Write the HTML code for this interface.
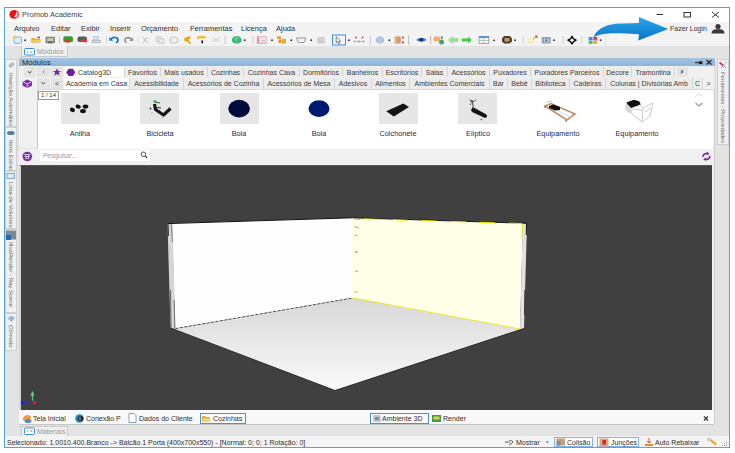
<!DOCTYPE html>
<html><head><meta charset="utf-8">
<style>
*{margin:0;padding:0;box-sizing:border-box}
html,body{width:735px;height:453px;overflow:hidden;background:#fff;font-family:"Liberation Sans",sans-serif;color:#222}
.a{position:absolute}
.t{position:absolute;white-space:nowrap;font-size:7px;line-height:8px;color:#303030}
#win{left:4px;top:7px;width:726px;height:441px;border:1px solid #55a2e2;background:#e3e3e3}
#title{left:5px;top:8px;width:724px;height:14px;background:#fff}
#menu{left:5px;top:22px;width:724px;height:24px;background:#f3f3f3}
#tabrow{left:5px;top:46px;width:724px;height:11px;background:#e3e3e3}
#hdr{left:19px;top:57.5px;width:696px;height:8.5px;background:linear-gradient(#a3c4e2,#8fb4d6)}
#row1{left:19px;top:66px;width:695px;height:82px;background:#f0f0f0}
#items{left:37px;top:89px;width:676px;height:60px;background:#fff;border-top:1px solid #d9d9d9;border-left:1px solid #c8c8c8}
#sbar{left:19px;top:149px;width:695px;height:16px;background:#f0f0f0}
#vp{left:19px;top:165px;width:693px;height:245px;background:#404040;border-top:1px solid #555;border-left:2px solid #d4d4d4}
#btabs{left:19px;top:410px;width:695px;height:15px;background:#f8f8f8;border-bottom:1px solid #c6c6c6}
#status{left:5px;top:436px;width:724px;height:11px;background:#f4f4f4}
#lpanel{left:5px;top:57px;width:14px;height:379px;background:#e3e3e3}
#rpanel{left:714px;top:57px;width:15px;height:379px;background:#e3e3e3}
.tb{position:absolute;top:67px;height:10px;background:#ececec;border-right:1px solid #d6d6d6;font-size:7px;line-height:12px;text-align:center;white-space:nowrap;color:#3a3a3a}
.tb2{top:78px;height:11px;line-height:12px}
.btn{position:absolute;background:#e4e4e4;font-size:7px;text-align:center;color:#333}
.vt{position:absolute;writing-mode:vertical-rl;font-size:6px;line-height:10px;overflow:hidden;white-space:nowrap;color:#6a6a6a;background:#f0f0f0;border:1px solid #cfcfcf}
.lbl{position:absolute;top:130px;width:80px;text-align:center;font-size:7.3px;line-height:8px;color:#1e2a50}
.thumb{position:absolute;top:93px;width:39px;height:31px;background:#e6e6e6}
</style></head><body>
<div id="win" class="a"></div>
<div id="title" class="a"></div>
<div id="menu" class="a"></div>
<div id="tabrow" class="a"></div>
<div id="lpanel" class="a"></div>
<div id="rpanel" class="a"></div>
<div id="hdr" class="a"></div>
<div id="row1" class="a"></div>
<div id="items" class="a"></div>
<div id="sbar" class="a"></div>
<div id="vp" class="a"></div>
<div id="btabs" class="a"></div>
<div class="a" style="left:712px;top:165px;width:2px;height:245px;background:#f0f0f0"></div><div class="a" style="left:714px;top:89px;width:1px;height:335px;background:#cfcfcf"></div>
<div id="status" class="a"></div>

<!-- title -->
<div class="t" style="left:22px;top:11px;font-size:7.5px;color:#444">Promob Academic</div>

<!-- menu -->
<div class="t" style="left:14px;top:25px;font-size:7.5px">Arquivo</div>
<div class="t" style="left:51px;top:25px;font-size:7.5px">Editar</div>
<div class="t" style="left:81px;top:25px;font-size:7.5px">Exibir</div>
<div class="t" style="left:110px;top:25px;font-size:7.5px">Inserir</div>
<div class="t" style="left:141px;top:25px;font-size:7.5px">Orçamento</div>
<div class="t" style="left:190px;top:25px;font-size:7.5px">Ferramentas</div>
<div class="t" style="left:241px;top:25px;font-size:7.5px">Licença</div>
<div class="t" style="left:276px;top:25px;font-size:7.5px">Ajuda</div>
<div class="t" style="left:670px;top:25px;color:#333">Fazer Login</div>

<!-- Modulos tab -->
<div class="a" style="left:21px;top:46px;width:47px;height:11px;background:#f0f0f0;border:1px solid #c9c9c9;border-top:none"></div>
<div class="t" style="left:37px;top:48px;color:#9a9a9a">Módulos</div>
<div class="t" style="left:22px;top:59px;color:#2a2a3a;font-size:7.6px">Módulos</div>

<!-- catalog row 1 -->
<div class="btn" style="left:24px;top:67px;width:12px;height:10px"></div>
<div class="btn" style="left:37px;top:67px;width:13px;height:10px"></div>
<div class="btn" style="left:51px;top:67px;width:12px;height:10px"></div>
<div class="tb" style="left:64px;width:61px;background:#fff;text-align:left;padding-left:14px">Catalog3D</div>
<div class="tb" style="left:125px;width:36px">Favoritos</div>
<div class="tb" style="left:161px;width:47px">Mais usados</div>
<div class="tb" style="left:208px;width:36px">Cozinhas</div>
<div class="tb" style="left:244px;width:56px">Cozinhas Cava</div>
<div class="tb" style="left:300px;width:43px">Dormitórios</div>
<div class="tb" style="left:343px;width:40px">Banheiros</div>
<div class="tb" style="left:383px;width:39px">Escritórios</div>
<div class="tb" style="left:422px;width:26px">Salas</div>
<div class="tb" style="left:448px;width:42px">Acessórios</div>
<div class="tb" style="left:490px;width:41px">Puxadores</div>
<div class="tb" style="left:531px;width:73px">Puxadores Parceiros</div>
<div class="tb" style="left:604px;width:28px">Decore</div>
<div class="tb" style="left:632px;width:43px">Tramontina</div>
<div class="btn" style="left:677px;top:67px;width:11px;height:10px;line-height:10px">›</div>

<!-- catalog row 2 -->
<div class="btn" style="left:37px;top:78px;width:13px;height:11px"></div>
<div class="btn" style="left:51px;top:78px;width:12px;height:11px;line-height:11px">&lt;</div>
<div class="tb tb2" style="left:64px;width:66px;background:#fff">Academia em Casa</div>
<div class="tb tb2" style="left:130px;width:54px">Acessibilidade</div>
<div class="tb tb2" style="left:184px;width:80px">Acessórios de Cozinha</div>
<div class="tb tb2" style="left:264px;width:71px">Acessórios de Mesa</div>
<div class="tb tb2" style="left:335px;width:37px">Adesivos</div>
<div class="tb tb2" style="left:372px;width:38px">Alimentos</div>
<div class="tb tb2" style="left:410px;width:80px">Ambientes Comerciais</div>
<div class="tb tb2" style="left:490px;width:18px">Bar</div>
<div class="tb tb2" style="left:508px;width:24px">Bebê</div>
<div class="tb tb2" style="left:532px;width:38px">Biblioteca</div>
<div class="tb tb2" style="left:570px;width:36px">Cadeiras</div>
<div class="tb tb2" style="left:606px;width:87px">Colunas | Divisórias Amb</div>
<div class="tb tb2" style="left:693px;width:10px;text-align:left;padding-left:2px">C</div>
<div class="btn" style="left:703px;top:78px;width:11px;height:11px;line-height:11px;background:#f0f0f0">&gt;</div>

<!-- items -->
<div class="a" style="left:38px;top:91px;width:21px;height:9px;border:1px solid #9a9a9a;background:#fff;font-size:6px;line-height:7px;text-align:center;color:#333">1 / 14</div>
<div class="thumb" style="left:61px"></div>
<div class="thumb" style="left:140px"></div>
<div class="thumb" style="left:220px"></div>
<div class="thumb" style="left:379px"></div>
<div class="thumb" style="left:458px"></div>
<div class="lbl" style="left:40px">Anilha</div>
<div class="lbl" style="left:120px">Bicicleta</div>
<div class="lbl" style="left:199px">Bola</div>
<div class="lbl" style="left:279px">Bola</div>
<div class="lbl" style="left:358px">Colchonete</div>
<div class="lbl" style="left:438px">Elíptico</div>
<div class="lbl" style="left:518px">Equipamento</div>
<div class="lbl" style="left:597px">Equipamento</div>

<!-- search -->
<div class="a" style="left:40px;top:150px;width:110px;height:11px;background:#fff"></div>
<div class="t" style="left:43px;top:152px;font-size:6.5px;color:#999;font-style:italic">Pesquisar...</div>

<!-- left vertical tabs -->
<div class="vt" style="left:5px;top:59px;width:12px;height:68px;padding-top:13px">Inserção Automática</div>
<div class="vt" style="left:5px;top:127px;width:12px;height:44px;padding-top:12px">Itens Extras</div>
<div class="vt" style="left:5px;top:171px;width:12px;height:58px;padding-top:10px">Lista de Volumes</div>
<div class="vt" style="left:5px;top:229px;width:12px;height:84px;padding-top:12px">IlluxRender - Ray Scene</div>
<div class="vt" style="left:5px;top:313px;width:12px;height:38px;padding-top:11px">Cômodo</div>
<!-- right vertical tab -->
<div class="vt" style="left:717px;top:59px;width:12px;height:86px;padding-top:12px;font-size:5.7px">Ferramentas - Propriedades</div>

<!-- bottom tabs -->
<div class="t" style="left:33px;top:415px">Tela Inicial</div>
<div class="t" style="left:86px;top:415px">Conexão P</div>
<div class="t" style="left:139px;top:415px">Dados do Cliente</div>
<div class="a" style="left:200px;top:413px;width:46px;height:11px;border:1px solid #4a90d9;background:#fbfbfb"></div>
<div class="t" style="left:213px;top:415px">Cozinhas</div>
<div class="a" style="left:370px;top:413px;width:59px;height:11px;border:1px solid #4a90d9;background:#fbfbfb"></div>
<div class="t" style="left:382px;top:415px">Ambiente 3D</div>
<div class="t" style="left:443px;top:415px">Render</div>

<!-- materiais tab -->
<div class="a" style="left:21px;top:426px;width:47px;height:10px;background:#f0f0f0;border:1px solid #c9c9c9;border-bottom:none"></div>
<div class="t" style="left:37px;top:428px;color:#9a9a9a">Materiais</div>

<!-- status -->
<div class="t" style="left:7px;top:439px">Selecionado: 1.0010.400.Branco -&gt; Balcão 1 Porta (400x700x550) - [Normal: 0; 0; 1 Rotação: 0]</div>
<div class="t" style="left:516px;top:439px">Mostrar</div>
<div class="a" style="left:554px;top:437px;width:39px;height:10px;border:1px solid #7eb4ea;background:#fbfdff"></div>
<div class="t" style="left:567px;top:439px">Colisão</div>
<div class="a" style="left:597px;top:437px;width:42px;height:10px;border:1px solid #7eb4ea;background:#fbfdff"></div>
<div class="t" style="left:611px;top:439px">Junções</div>
<div class="t" style="left:655px;top:439px">Auto Rebaixar</div>

<svg class="a" style="left:0;top:0" width="735" height="453" viewBox="0 0 735 453">
<defs>
<linearGradient id="fl" x1="0" y1="0" x2="0" y2="1"><stop offset="0" stop-color="#d8d8d8"/><stop offset="1" stop-color="#fafafa"/></linearGradient>
<linearGradient id="ar" x1="0" y1="0" x2="0" y2="1"><stop offset="0" stop-color="#2aa8ec"/><stop offset="1" stop-color="#0a74c4"/></linearGradient>
</defs>
<!-- 3D room -->
<polygon points="175.5,328.6 352.6,298 524,328.5 335,390.5 170.5,328" fill="url(#fl)"/>
<polygon points="172,223.3 352.6,217.8 352.6,298 175,328.6" fill="#fefefe"/>
<polygon points="167.5,223.4 172.5,223.3 175.5,328.6 170.5,328" fill="#d6d6d6"/>
<line x1="171.2" y1="224" x2="172.5" y2="242" stroke="#808080" stroke-width="1"/>
<line x1="168" y1="224" x2="168.4" y2="236" stroke="#222" stroke-width="1"/>
<line x1="174.2" y1="300" x2="174.8" y2="328" stroke="#555" stroke-width="0.8"/>
<line x1="170.5" y1="290" x2="171" y2="328" stroke="#444" stroke-width="0.8"/>
<polygon points="352,217.8 523,223 520,329 352,298.1" fill="#fffee6"/>
<polygon points="522.8,223 527,223.5 524,328.4 520,329" fill="#e2e2e2"/>
<line x1="526.5" y1="224" x2="526.2" y2="235" stroke="#111" stroke-width="1"/>
<line x1="524.8" y1="290" x2="524.5" y2="315" stroke="#222" stroke-width="0.8"/>
<line x1="522.5" y1="224" x2="522.3" y2="235" stroke="#f0e800" stroke-width="0.8"/>
<polyline points="167.5,223.6 352.6,217.8 527,223.3" fill="none" stroke="#111" stroke-width="1"/>
<line x1="364" y1="218.9" x2="522" y2="223.6" stroke="#f0e800" stroke-width="1" stroke-dasharray="15,14"/>
<line x1="175.5" y1="328.6" x2="352.6" y2="298" stroke="#333" stroke-width="0.8" stroke-dasharray="3,1.5"/>
<line x1="352.6" y1="298" x2="520" y2="329" stroke="#ece400" stroke-width="0.8"/>
<polyline points="170.5,328 335,390.5 524,328.5" fill="none" stroke="#2a2a2a" stroke-width="1"/>
<g stroke="#8a8a80" stroke-width="0.7" fill="none"><path d="M354,219.5 q2,-1.5 4,0 l2,0"/><path d="M354,227.5 l2,-1 l1,1.5 l2,0"/><path d="M354.5,236 q1.5,-2 3,0"/><path d="M355,252 l3,0 M356,251 v2"/><path d="M355,271 l3,0.5"/><path d="M354.5,292 l3,0"/></g>
<!-- axis -->
<line x1="32.5" y1="401" x2="32.5" y2="394.5" stroke="#5cc88a" stroke-width="1.3"/>
<polygon points="30.3,395.5 34.7,395.5 32.5,391" fill="#5cd090"/>
<line x1="22" y1="403" x2="33" y2="401" stroke="#2030d8" stroke-width="1.2"/>
<circle cx="34.6" cy="402.6" r="1.6" fill="#f01818"/>
<circle cx="22.2" cy="402.9" r="1.6" fill="#1020f0"/>
<!-- title bar -->
<ellipse cx="14.3" cy="14.3" rx="4.9" ry="4.4" fill="#f20e0e"/><path d="M16.2,10.4 Q19.6,12 19.1,15.2 Q18.4,18.2 14.6,18.6 Q17.8,16 16.2,10.4 z" fill="#f86a6a"/><path d="M16.4,11.6 Q18,14.5 16.8,16.3 Q15.8,17.4 14.2,17.2 Q14.6,15.8 15.6,14.6 Q16.4,13.4 16.4,11.6 z" fill="#fff"/>
<line x1="656.5" y1="14.5" x2="663" y2="14.5" stroke="#333" stroke-width="1"/>
<rect x="684" y="12.5" width="6.5" height="4.5" fill="none" stroke="#333" stroke-width="1"/>
<path d="M712,12 L719,17.5 M719,12 L712,17.5" stroke="#333" stroke-width="1"/>
<!-- user icon -->
<circle cx="718" cy="26.6" r="2.6" fill="#3a3a3a"/>
<path d="M711.5,33.5 Q711.5,29.5 716,29.3 L720,29.3 Q724.5,29.5 724.5,33.5 Z" fill="#3a3a3a"/>
<!-- arrow -->
<path d="M593.6,37.5 C596,30 604,25 616,23.8 L639,23 L638.9,17.1 L668.3,29 L638.3,40.4 L639,34.3 L621,33.3 C608,33 598,34 593.6,37.5 Z" fill="url(#ar)"/>
<!-- toolbar -->
<g id="toolbar">
<line x1="9.5" y1="36" x2="9.5" y2="44" stroke="#d8d8d8" stroke-dasharray="1,1"/>
<rect x="14" y="37" width="7.5" height="6.3" rx="1" fill="#dcedfb" stroke="#79ade0" stroke-width="0.9"/>
<circle cx="14.6" cy="37.2" r="1.6" fill="#f4d040"/>
<circle cx="25.1" cy="40.2" r="0.9" fill="#222"/>
<path d="M31.3,38 h3.5 l1,1 h4.5 v3.4 h-9 z" fill="#dcae38"/><path d="M32.5,40 h8.3 l-1,2.5 h-8 z" fill="#f0cc58"/><rect x="37.5" y="36.7" width="2.5" height="1.5" fill="#555"/>
<rect x="45.5" y="36.7" width="9.5" height="6.5" rx="1" fill="#86866e"/><rect x="47.2" y="38" width="6.2" height="3.8" fill="#c8c8b4"/><rect x="48" y="41.3" width="4.5" height="1.9" fill="#5e5e50"/>
<line x1="59.5" y1="36" x2="59.5" y2="43.5" stroke="#c8c8c8"/>
<rect x="63.3" y="36.3" width="9.7" height="6" rx="2" fill="#3c9c30"/><path d="M63.5,41.2 l3,-1.8 h3 v3 h-3 z" fill="#e03a2a"/>
<rect x="77.5" y="36.5" width="9.5" height="5.6" rx="2" fill="#5a5a5a"/><path d="M80.3,41 l3,-1.8 h3.8 v3 h-3.8 z" fill="#e03a2a"/>
<rect x="93.5" y="36.5" width="5" height="3" fill="#d8e8f6" stroke="#8ab0d8" stroke-width="0.5"/><path d="M91.8,40 h9 v3 h-9 z" fill="#b4b8bc"/><rect x="92.5" y="41" width="7.5" height="1" fill="#e4e4e4"/>
<line x1="106.5" y1="36" x2="106.5" y2="43.5" stroke="#d4d4d4"/>
<path d="M109.3,37 v3.8 h3.8 z" fill="#1a74d4"/><path d="M110.5,39.5 Q113.5,36.2 117,38 Q119.5,40.5 116,42.8" stroke="#1a74d4" stroke-width="1.8" fill="none"/>
<path d="M133.2,37.3 v3.8 h-3.8 z" fill="#909090"/><path d="M132,39.7 Q129,36.5 125.8,38.2 Q123.5,40.5 126.5,42.6" stroke="#909090" stroke-width="1.6" fill="none"/>
<line x1="138" y1="36" x2="138" y2="43.5" stroke="#dcdcdc"/>
<path d="M142.8,37 l5.2,6.3 M148,37 l-5.2,6.3" stroke="#bcbcbc" stroke-width="1"/>
<rect x="156.2" y="36.8" width="4.8" height="5" fill="#e8e8e8" stroke="#c0c0c0" stroke-width="0.7"/><rect x="159" y="38.8" width="4.8" height="4.8" fill="#ececec" stroke="#c0c0c0" stroke-width="0.7"/>
<rect x="169.6" y="37" width="8.5" height="6.2" rx="2.5" fill="#e2e2e2" stroke="#c4c4c4" stroke-width="0.7"/><rect x="172" y="38.5" width="4" height="3" fill="#f2f2f2"/>
<path d="M184,38.3 l5.8,-2.3 l1,2.2 l-2.6,1.6 l3.2,3.4 l-1.2,1 l-3.5,-3 l-2,0.4 z" fill="#e4a810"/>
<rect x="197.6" y="36.2" width="8.2" height="2.2" fill="#f2b81a"/><rect x="197" y="36.6" width="1.2" height="3" fill="#c8c8c8"/><rect x="201.3" y="40.2" width="1.8" height="3.3" rx="0.9" fill="#222"/>
<path d="M212.5,37.5 l7.2,4.5 M219.7,37.5 l-7.2,4.5" stroke="#c8c8c8" stroke-width="1"/>
<line x1="225" y1="36" x2="225" y2="44" stroke="#c8c8c8"/>
<path d="M234.5,36.3 h4.5 l2.5,2.3 v3 l-2.5,2 h-4.5 l-2.5,-2 v-3 z" fill="#3cb878"/><path d="M234,38.5 h5 M236.5,37 v5" stroke="#88dcb0" stroke-width="0.6"/>
<circle cx="244.7" cy="40.2" r="0.9" fill="#222"/>
<line x1="253" y1="36" x2="253" y2="43.5" stroke="#d0d0d0"/>
<rect x="257.3" y="36.8" width="8.8" height="6.5" fill="#fff" stroke="#e88a9a" stroke-width="0.8"/><rect x="257.3" y="37" width="2" height="6" fill="#e88a9a"/><path d="M260.5,38.8 h4.5 M260.5,40.5 h4.5 M260.5,42 h4.5" stroke="#a0a0a0" stroke-width="0.6"/>
<circle cx="272" cy="40.2" r="0.9" fill="#222"/>
<rect x="277" y="36.5" width="4" height="2.5" fill="#e2a030"/><rect x="278.5" y="39.5" width="3" height="3.5" fill="#dc9628"/><rect x="282" y="39" width="4" height="4.5" fill="#e8a838"/>
<circle cx="291.3" cy="40.2" r="0.9" fill="#222"/>
<path d="M296.5,38 h9.3 l-1.8,4.5 h-5.5 z" fill="none" stroke="#8a8a8a" stroke-width="0.9"/>
<circle cx="311.3" cy="40.2" r="0.9" fill="#222"/>
<rect x="317.4" y="37" width="7.4" height="6.5" fill="#cfcfcf"/>
<rect x="332.5" y="35" width="13" height="10" fill="#eef5fc" stroke="#3d8ee0" stroke-width="1"/>
<path d="M336.2,36.8 v6 l1.4,-1.3 l1.3,2.5 l1,-0.5 l-1.3,-2.3 h2 z" fill="#fff" stroke="#555" stroke-width="0.7"/>
<circle cx="348.9" cy="40.2" r="0.9" fill="#222"/>
<circle cx="356" cy="37.6" r="1" fill="#e84040"/><circle cx="362.5" cy="37.6" r="1" fill="#e84040"/>
<path d="M354,41.5 h10 M354.3,40 v3 M363.7,40 v3 M359,40 v3" stroke="#9a9ab0" stroke-width="0.7"/>
<line x1="370.5" y1="36" x2="370.5" y2="44" stroke="#c8c8c8"/>
<path d="M379.9,36 l4.1,2 v4 l-4.1,2 l-4.1,-2 v-4 z" fill="#a4c4e2"/><path d="M375.8,38 l4.1,2 l4.1,-2 M379.9,40 v4" stroke="#d0e2f2" stroke-width="0.5" fill="none"/>
<circle cx="389.3" cy="40.2" r="0.9" fill="#222"/>
<rect x="394.6" y="36.5" width="6.2" height="7" fill="#caa06a"/><rect x="395.5" y="37.5" width="1" height="5" fill="#e8c898"/>
<circle cx="402.9" cy="37.6" r="1.1" fill="#f0306a"/><circle cx="402.9" cy="42.4" r="1.1" fill="#f0306a"/>
<line x1="408.6" y1="35" x2="408.6" y2="45" stroke="#bdbdbd"/>
<path d="M416.3,40 Q421.4,35.5 426.5,40 Q421.4,43.5 416.3,40 z" fill="#2a66b8"/><circle cx="421.4" cy="39.7" r="1.5" fill="#0e2e60"/>
<line x1="430.6" y1="36" x2="430.6" y2="44" stroke="#b8b8b8"/>
<rect x="433.5" y="36.5" width="6.5" height="4.8" rx="1.5" fill="#eab070"/><circle cx="441.5" cy="42" r="2.5" fill="#40a860"/><rect x="441" y="36.5" width="1.5" height="2" fill="#444"/>
<path d="M448.6,40 l3.8,-3.5 v2 h5.6 v3 h-5.6 v2 z" fill="#a0e0a0" stroke="#70c870" stroke-width="0.5"/>
<path d="M471.9,40 l-3.8,-3.5 v2 h-6.4 v3 h6.4 v2 z" fill="#48c848"/>
<rect x="479" y="36.5" width="9.8" height="7" fill="#f4f4f4" stroke="#8a8a8a" stroke-width="0.7"/><rect x="479" y="36.3" width="9.8" height="1.6" fill="#3a8ee0"/><path d="M483.5,38 v5.5 M479,40.5 h9.8" stroke="#999" stroke-width="0.5"/>
<circle cx="494" cy="40.3" r="0.9" fill="#222"/>
<path d="M504.2,36 h5.5 l2.2,2.2 v3.1 l-2.2,2.2 h-5.5 l-2.2,-2.2 v-3.1 z" fill="#4a3a28"/><rect x="504.5" y="38" width="5" height="3.6" fill="#c89a60"/>
<circle cx="515.1" cy="40.2" r="0.9" fill="#222"/>
<line x1="523.3" y1="36" x2="523.3" y2="44" stroke="#d0d0d0"/>
<circle cx="531" cy="40.8" r="2.8" fill="#f8e8a0"/><circle cx="531" cy="40.8" r="1.6" fill="#fff8d8"/><path d="M533,39 l2.5,-2" stroke="#d08040" stroke-width="0.8"/><circle cx="536.4" cy="36.7" r="1.4" fill="#e86020"/>
<rect x="541.7" y="37" width="9" height="6.5" fill="#90a8b0"/><rect x="544" y="39" width="4.5" height="2.5" fill="#d0dce0"/><circle cx="546.2" cy="40.2" r="1" fill="#2060a0"/>
<circle cx="554" cy="40.2" r="0.9" fill="#222"/>
<line x1="563" y1="36" x2="563" y2="44" stroke="#d0d0d0"/>
<path d="M572,37.2 l3.3,3 l-3.3,3 l-3.3,-3 z" fill="none" stroke="#111" stroke-width="1.5"/>
<circle cx="572" cy="36.9" r="1.1" fill="#111"/><circle cx="572" cy="43.5" r="1.1" fill="#111"/><circle cx="568.5" cy="40.2" r="1.1" fill="#111"/><circle cx="575.5" cy="40.2" r="1.1" fill="#111"/>
<line x1="582" y1="36" x2="582" y2="44" stroke="#d0d0d0"/>
<rect x="588.6" y="37" width="4" height="3.5" fill="#3a90e0"/><rect x="593.3" y="37" width="4" height="3.5" fill="#e04848"/><rect x="588.6" y="41.2" width="4" height="2.5" fill="#30c040"/><rect x="593.3" y="41.2" width="4" height="2.5" fill="#e0a040"/>
<circle cx="600.6" cy="40.2" r="0.9" fill="#222"/>
<line x1="605.7" y1="34" x2="605.7" y2="46" stroke="#e4e4e4"/>
</g>

<!-- modulos tab icon -->
<rect x="24.5" y="48.5" width="10" height="6.5" rx="1" fill="#fff" stroke="#3a8ee0" stroke-width="1"/>
<path d="M26.5,52 h2 M30,52 h2.5" stroke="#3a8ee0" stroke-width="0.8"/>
<!-- header pin and close -->
<path d="M695,62.6 h4" stroke="#222" stroke-width="0.9"/><path d="M695,62.6 l1.5,-1 v2 z" fill="#222"/><rect x="698.8" y="61.2" width="3.6" height="2.9" fill="#222"/>
<path d="M706.5,60 l5,4.5 M711.5,60 l-5,4.5" stroke="#222" stroke-width="1.2"/>
<!-- row1 buttons -->
<path d="M28,71.5 l1.8,1.3 l1.8,-1.3" stroke="#333" stroke-width="0.9" fill="none"/>
<path d="M44.5,70.8 l-1.5,1.2 l1.5,1.2" stroke="#666" stroke-width="0.7" fill="none"/>
<path d="M57,68.3 l1.2,2.7 h2.9 l-2.3,1.8 l0.9,2.9 l-2.7,-1.7 l-2.7,1.7 l0.9,-2.9 l-2.3,-1.8 h2.9 z" fill="#6a2fa0"/>
<path d="M66.2,72.3 L68.6,68.8 L72.9,68.8 L75.2,72.3 L72.9,75.9 L68.6,75.9 Z" fill="#6a1f9a"/>
<path d="M681,70.5 l1.5,1.5 l-1.5,1.5" stroke="#333" stroke-width="0.9" fill="none"/>
<!-- row2 -->
<path d="M27.3,79.5 l4.7,2.2 v4 l-4.7,2.3 l-4.7,-2.3 v-4 z" fill="#7a30a8"/>
<path d="M23.3,82 l4,2 l4,-2 M27.3,84 v3.5" stroke="#fff" stroke-width="0.7" fill="none"/>
<path d="M41.5,82.5 l1.8,1.3 l1.8,-1.3" stroke="#333" stroke-width="0.9" fill="none"/>
<!-- thumbnails -->
<g fill="#111">
<ellipse cx="72.4" cy="109.9" rx="2.6" ry="2.1" transform="rotate(25 72.4 109.9)"/><ellipse cx="78.2" cy="106.6" rx="2.7" ry="2" transform="rotate(20 78.2 106.6)"/><ellipse cx="85.5" cy="106.6" rx="2.8" ry="2.1"/><ellipse cx="83" cy="111.1" rx="2.9" ry="2.2"/>
</g>
<path d="M154.5,104 L155.5,109.5 L163.5,115 L170.5,108.5" stroke="#161616" stroke-width="3.2" fill="none" stroke-linejoin="round"/><path d="M157,107.5 l4,0.5" stroke="#222" stroke-width="1.2"/>
<path d="M155,102 l5,1" stroke="#333" stroke-width="0.9"/>
<circle cx="155" cy="101.5" r="1.6" fill="#3cb04a"/>
<circle cx="150.5" cy="108.5" r="0.9" fill="#333"/>
<path d="M151,113.5 l2,-1 M162,118.5 l1.5,-1.5" stroke="#999" stroke-width="0.6"/>
<ellipse cx="239.1" cy="108.6" rx="10.8" ry="8.8" fill="#000a3c"/>
<ellipse cx="319" cy="108.6" rx="10.5" ry="8.4" fill="#001a70"/>
<polygon points="386.2,111.2 403.3,103.6 409,107 393.8,116.6" fill="#151515"/>
<path d="M469.5,99.5 l3,2.5 l0.8,6 M473.5,102 l2.5,-2.5 M471,103.5 l-1,1.5" stroke="#333" stroke-width="0.9" fill="none"/><circle cx="472" cy="101.5" r="1.2" fill="#444"/>
<polygon points="472.5,107.5 474.5,108 486.5,114.5 487,117 485,118 472,112 471,110" fill="#141414"/>
<circle cx="481.5" cy="119.5" r="0.8" fill="#555"/>
<path d="M545,106 L567,120 L575,114 L551,103.5 Z" fill="none" stroke="#c09068" stroke-width="1.6"/>
<path d="M548,106.5 L571,117" stroke="#ddd" stroke-width="1"/>
<polygon points="549,106 553,104.5 560,107 560,110 555,110.5 549,108" fill="#111"/>
<path d="M546,103 l3,-2 l3,1" stroke="#bbb" stroke-width="0.8" fill="none"/>
<path d="M566,120 v2 M545,106 v2" stroke="#a07048" stroke-width="1.2"/>
<polygon points="625.5,104 628,103.5 631.5,108 632,114 627,112 625,108" fill="#d8d8d8"/>
<polygon points="626.3,102.5 633.9,99.8 639.2,101.2 640.8,104.5 631.3,108 628,104.8" fill="#111"/>
<path d="M632,114 L642,122 L643,108 L653,103 L650,116 L642,122 M632,109 l10,1 M643,108 l-3,-3.5 M645,112 l6,-4" stroke="#c4c4c4" stroke-width="0.9" fill="none"/>
<!-- chevrons -->
<path d="M695.5,96.5 l3.5,-3 l3.5,3" stroke="#d8d8d8" stroke-width="1" fill="none"/>
<path d="M695.5,103 l3.5,3 l3.5,-3" stroke="#9a9a9a" stroke-width="1.3" fill="none"/>
<!-- search icon & refresh -->
<circle cx="143.5" cy="154.3" r="2.3" fill="none" stroke="#444" stroke-width="0.9"/>
<path d="M145.2,156 l2,2" stroke="#444" stroke-width="1.1"/>
<circle cx="27.3" cy="156.5" r="4.8" fill="#7a30a8"/>
<path d="M24,154.5 h6.6 M24.5,156.5 h5.6 M25.5,158.5 h3.6 M26,154.5 v4 M28.5,154.5 v4" stroke="#fff" stroke-width="0.6"/>
<path d="M702.8,156.8 Q703.5,153 707.5,153.5 M710,155.8 Q709.5,159.8 705.2,159.3" stroke="#7a28a0" stroke-width="1.6" fill="none"/><path d="M706.5,151.8 l3,1.8 l-2.6,1.8 z M706.2,161 l-3,-1.8 l2.6,-1.8 z" fill="#7a28a0"/>
<!-- left tab icons -->
<path d="M8,66 l4,-4 l3,2 l-4,4 z" fill="#b8b8b8"/>
<ellipse cx="10.8" cy="133" rx="3.8" ry="2" fill="#5a7a9a"/>
<rect x="7" y="173.5" width="7.5" height="5" fill="#dbe8f5" stroke="#5a8ac0" stroke-width="0.7"/>
<rect x="6" y="230.5" width="10" height="9" fill="#7a8a90"/><rect x="6" y="235" width="5" height="5" fill="#2a6ab0"/>
<path d="M7.5,318.5 l3.5,-3 l4,2.5 l-3.5,4 z" fill="#9ab8d0"/>
<!-- right tab icon -->
<path d="M719.5,62.5 l3.8,3" stroke="#e03040" stroke-width="1.6"/><path d="M723.5,65.5 l2.5,2.5 M721,68 l2,-2" stroke="#6080c0" stroke-width="0.8"/><path d="M725.5,61.5 q1.5,1 0,2.5 l-1.5,1" stroke="#90b0d8" stroke-width="0.8" fill="none"/>
<!-- bottom tabs icons -->
<path d="M22.5,420 q1,-5 5.5,-5 l3,1 l-1,6 z" fill="#f09a40"/><ellipse cx="28" cy="421" rx="3.5" ry="2" fill="#5a88c8"/>
<circle cx="79.5" cy="418.5" r="4.3" fill="#2090c8"/><circle cx="80.5" cy="418.5" r="2.8" fill="#222"/><path d="M80,416.5 v4" stroke="#fff" stroke-width="0.7"/>
<path d="M129,413.5 h5 l2,2 v7 h-7 z" fill="#fff" stroke="#5a8ac8" stroke-width="0.8"/>
<path d="M202,416 h3 l1,1 h4 v5 h-8 z" fill="#e0b040"/><path d="M203,418.5 h8 l-1,3.5 h-8 z" fill="#f6d47a"/>
<rect x="373" y="415" width="8" height="7" rx="1.5" fill="#c0c8d0"/><rect x="375" y="417" width="4" height="3" fill="#7090b0"/>
<rect x="432" y="415" width="9" height="7" fill="#3a9a50"/><rect x="433.5" y="416.5" width="6" height="3" fill="#f0d040"/>
<path d="M704,416.5 l4,4 M708,416.5 l-4,4" stroke="#333" stroke-width="1.2"/>
<!-- materiais icon -->
<rect x="24.5" y="428" width="10" height="6.5" rx="1" fill="#fff" stroke="#3a8ee0" stroke-width="1"/>
<path d="M26.5,431 h2" stroke="#30b060" stroke-width="0.9"/><path d="M30,431 h2.5" stroke="#e04848" stroke-width="0.9"/>
<!-- status icons -->
<path d="M545.5,441.5 h3.5 l-1.75,1.5 z" fill="#555"/>
<path d="M505,442 h4 M509,441 q3,-1 4,1 l-2,2 h-2" stroke="#333" stroke-width="0.8" fill="none"/>
<rect x="556.5" y="438.5" width="8.5" height="7" fill="#c8a070"/><rect x="556.5" y="441" width="4" height="4.5" fill="#8090a0"/>
<rect x="599.5" y="438.5" width="9" height="8" fill="#d8a880"/><rect x="602.5" y="440" width="3.5" height="4.5" fill="#e02020"/>
<rect x="645" y="444" width="8" height="2" fill="#e88a2a"/><path d="M649,438 v5 M647,441 l2,2 l2,-2" stroke="#e05020" stroke-width="1" fill="none"/>
<path d="M707,439 q2,-2 4,0 l6,5 l-1.5,1.5 l-6,-5 q-3,1 -2.5,-1.5" fill="#f0a020"/><circle cx="709" cy="439.5" r="2" fill="#d0d0d0"/>
<g fill="#999"><rect x="726" y="441" width="1" height="1"/><rect x="724" y="443" width="1" height="1"/><rect x="726" y="443" width="1" height="1"/><rect x="722" y="445" width="1" height="1"/><rect x="724" y="445" width="1" height="1"/><rect x="726" y="445" width="1" height="1"/></g>
</svg>

</body></html>
